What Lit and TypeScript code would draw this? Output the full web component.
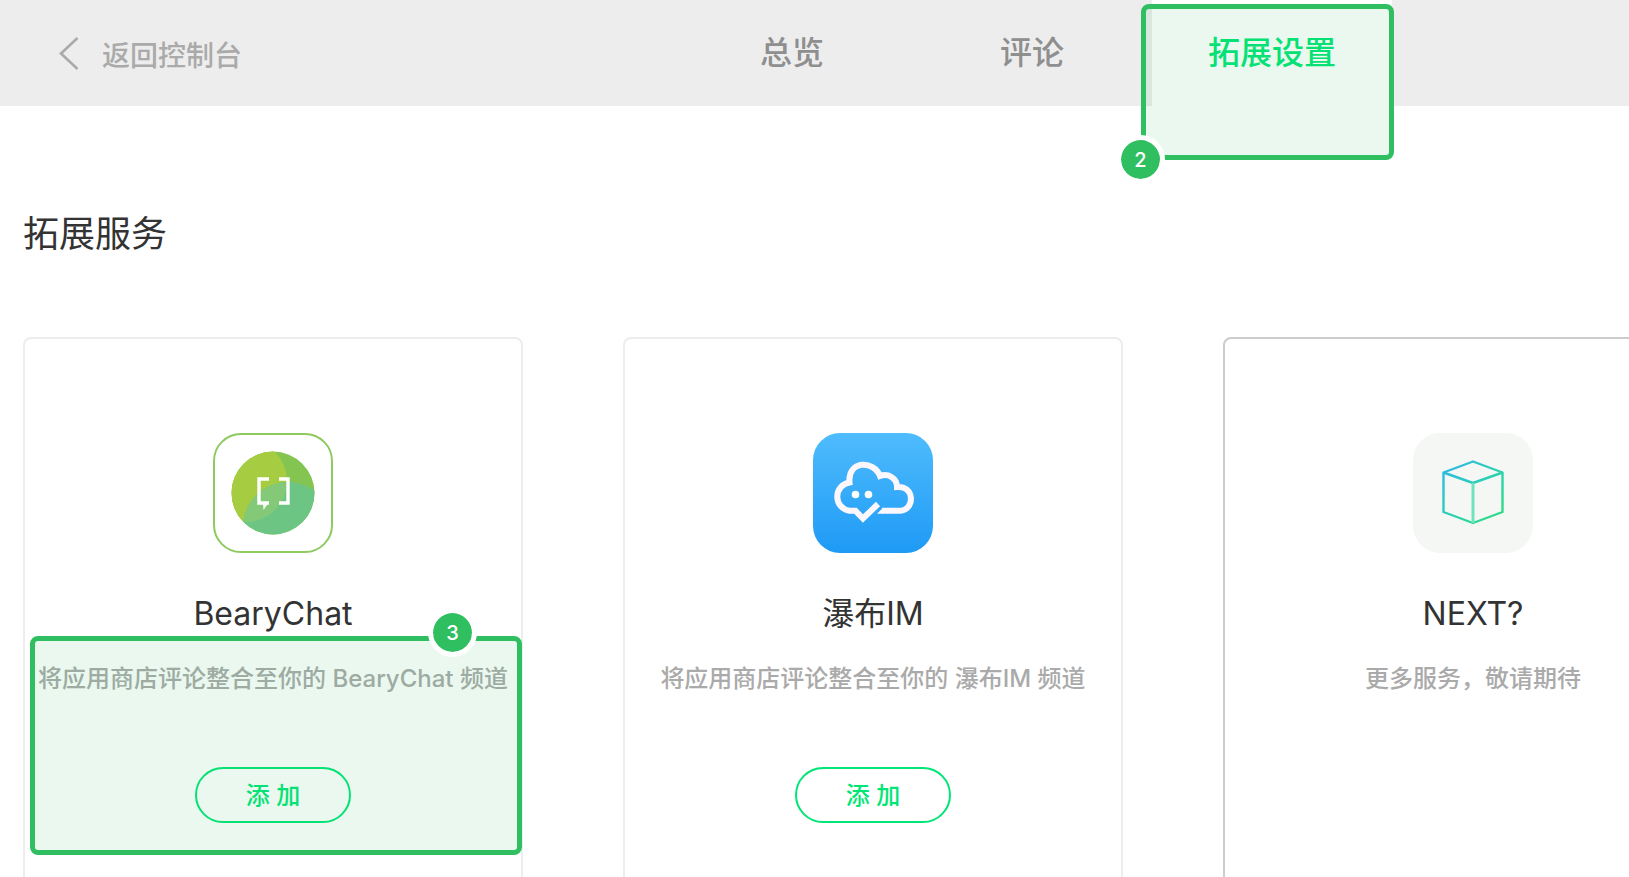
import { LitElement, html, css, nothing, TemplateResult } from "lit";
import { customElement, property } from "lit/decorators.js";

const bearyIcon = html`<svg class="logo" viewBox="0 0 120 120" aria-hidden="true">
  <defs>
    <clipPath id="disc"><circle cx="60" cy="60" r="41.5" /></clipPath>
    <clipPath id="lime"><circle cx="33" cy="48" r="41" /></clipPath>
  </defs>
  <rect x="1" y="1" width="118" height="118" rx="27" fill="#fff" stroke="#8fca60" stroke-width="2" />
  <g clip-path="url(#disc)">
    <rect width="120" height="120" fill="#84c450" />
    <circle cx="33" cy="48" r="41" fill="#a6cc42" />
    <circle cx="75" cy="94" r="45" fill="#6cc583" />
    <g clip-path="url(#lime)"><circle cx="75" cy="94" r="45" fill="#84c978" /></g>
  </g>
  <path d="M56 46H46V70H56M66 46H75V70H66" fill="none" stroke="#fff" stroke-width="3.4" />
  <path d="M50 69H56L50.5 77Z" fill="#fff" />
</svg>`;

const cloudIcon = html`<svg class="logo" viewBox="0 0 120 120" aria-hidden="true">
  <defs>
    <linearGradient id="sky" x1="0" y1="0" x2="0" y2="1">
      <stop offset="0" stop-color="#4fbcfd" />
      <stop offset="1" stop-color="#1e9af5" />
    </linearGradient>
  </defs>
  <rect width="120" height="120" rx="27" fill="url(#sky)" />
  <path
    d="M65 71L50 85.500L42.500 77.800H36.500A14.300 14.300 0 0 1 36.500 49.500C34.500 27 61 27 67 43C75 40 84 45 84 54C102 52 102.500 77.800 86 77.800H69"
    fill="none" stroke="#fbf7fd" stroke-width="6" />
  <path d="M64 80.800L70 74.800V80.800Z" fill="#fbf7fd" />
  <circle cx="42.500" cy="61.500" r="3.800" fill="#fff" />
  <circle cx="55.500" cy="61.500" r="3.800" fill="#fff" />
</svg>`;

const cubeIcon = html`<svg class="logo" viewBox="0 0 120 120" aria-hidden="true">
  <defs>
    <linearGradient id="mint" gradientUnits="userSpaceOnUse" x1="34" y1="34" x2="84" y2="86">
      <stop offset="0" stop-color="#2cbbe0" />
      <stop offset="0.5" stop-color="#2cd0b4" />
      <stop offset="1" stop-color="#2edc86" />
    </linearGradient>
  </defs>
  <rect width="120" height="120" rx="27" fill="#f5f7f5" />
  <g fill="none" stroke="url(#mint)" stroke-width="2.400" stroke-linejoin="round">
    <path d="M60 28.500L89.500 39.500V79L60 90L30.500 79V39.500Z" />
    <path d="M30.500 39.500L60 50L89.500 39.500" />
  </g>
  <path d="M60 50V90" stroke="#6fe3bd" stroke-width="3" />
</svg>`;

const palette = css`
  * {
    box-sizing: border-box;
  }
  .mark {
    position: absolute;
    border: 5px solid #2fbe60;
    border-radius: 8px;
    background: rgba(47, 190, 96, 0.1);
    pointer-events: none;
  }
  .badge {
    position: absolute;
    display: flex;
    align-items: center;
    justify-content: center;
    width: 49px;
    height: 49px;
    border: 5px solid #fff;
    border-radius: 50%;
    background: #2fbe60;
    background-clip: padding-box;
    color: #fff;
    font: 500 20px/24px Inter, sans-serif;
  }
`;

@customElement("service-card")
export class ServiceCard extends LitElement {
  @property() name = "";
  @property() description = "";
  @property() step = "";
  @property({ attribute: false }) logo?: TemplateResult;
  @property({ type: Boolean }) addable = false;

  static styles = [
    palette,
    css`
      :host {
        display: flex;
        flex-direction: column;
        box-sizing: border-box;
        min-height: 640px;
        padding-top: 94px;
        border: 2px solid #ededed;
        border-radius: 8px;
        text-align: center;
      }
      :host(:not([addable])) {
        border-color: #ccc;
      }
      .logo {
        display: block;
        width: 120px;
        height: 120px;
        margin: 0 auto;
      }
      .name {
        margin: 38px 0 0;
        font-weight: 400;
        font-size: 32px;
        line-height: 45px;
        color: #333;
      }
      .body {
        position: relative;
        padding: 25px 0 32px;
      }
      .description {
        margin: 0;
        font-weight: 500;
        font-size: 24px;
        line-height: 36px;
        color: #aaa;
        white-space: nowrap;
      }
      .add {
        width: 156px;
        height: 56px;
        margin-top: 70px;
        padding: 0 0 4px;
        border: 2px solid #00e676;
        border-radius: 28px;
        background: none;
        color: #00e676;
        font: inherit;
        font-weight: 500;
        font-size: 24px;
        cursor: pointer;
      }
      .mark {
        inset: 0 -1px 0 5px;
      }
      .badge {
        right: 40px;
        top: -33px;
      }
    `,
  ];

  render() {
    return html`
      ${this.logo}
      <h2 class="name">${this.name}</h2>
      <div class="body">
        <p class="description">${this.description}</p>
        ${this.addable ? html`<button class="add" type="button">添 加</button>` : nothing}
        ${this.step ? html`<div class="mark"><span class="badge">${this.step}</span></div>` : nothing}
      </div>
    `;
  }
}

@customElement("app-root")
export class AppRoot extends LitElement {
  static styles = [
    palette,
    css`
      :host {
        display: block;
        height: 100vh;
        overflow: hidden;
        background: #fff;
        font-family: Inter, "Noto Sans CJK SC", sans-serif;
      }
      .header {
        display: flex;
        justify-content: space-between;
        height: 106px;
        padding: 0 237px 0 59px;
        background: #ededed;
      }
      .back {
        display: flex;
        align-items: center;
        gap: 23px;
        color: #aaa;
        font-weight: 500;
        font-size: 28px;
        text-decoration: none;
      }
      .back-text {
        padding-top: 5px;
        line-height: 40px;
      }
      .chevron {
        width: 20px;
        height: 34px;
      }
      .tabs {
        display: flex;
      }
      .tab {
        position: relative;
        width: 240px;
      }
      .tab.active {
        background: #fff;
      }
      .link {
        display: block;
        color: #8f8f8f;
        font-weight: 500;
        font-size: 32px;
        line-height: 106px;
        text-align: center;
        text-decoration: none;
      }
      .active .link {
        color: #00e676;
      }
      .mark {
        inset: 4px -2px auto -11px;
        height: 156px;
      }
      .badge {
        left: -30px;
        bottom: -29px;
      }
      .main {
        padding: 101px 23px 0;
      }
      .heading {
        margin: 0 0 76px;
        font-weight: 400;
        font-size: 36px;
        line-height: 54px;
        color: #333;
      }
      .cards {
        display: grid;
        grid-auto-flow: column;
        grid-auto-columns: 500px;
        gap: 100px;
      }
    `,
  ];

  render() {
    return html`
      <header class="header">
        <a class="back" href="#">
          <svg class="chevron" viewBox="0 0 20 34" aria-hidden="true">
            <path d="M18.500 2L2 17.500L18.500 33" fill="none" stroke="#aaa" stroke-width="2.600" />
          </svg>
          <span class="back-text">返回控制台</span>
        </a>
        <nav class="tabs">
          <div class="tab"><a class="link" href="#">总览</a></div>
          <div class="tab"><a class="link" href="#">评论</a></div>
          <div class="tab active">
            <a class="link" href="#">拓展设置</a>
            <div class="mark"><span class="badge">2</span></div>
          </div>
        </nav>
      </header>
      <main class="main">
        <h1 class="heading">拓展服务</h1>
        <div class="cards">
          <service-card
            name="BearyChat"
            description="将应用商店评论整合至你的 BearyChat 频道"
            step="3"
            addable
            .logo=${bearyIcon}
          ></service-card>
          <service-card
            name="瀑布IM"
            description="将应用商店评论整合至你的 瀑布IM 频道"
            addable
            .logo=${cloudIcon}
          ></service-card>
          <service-card name="NEXT?" description="更多服务，敬请期待" .logo=${cubeIcon}></service-card>
        </div>
      </main>
    `;
  }
}
